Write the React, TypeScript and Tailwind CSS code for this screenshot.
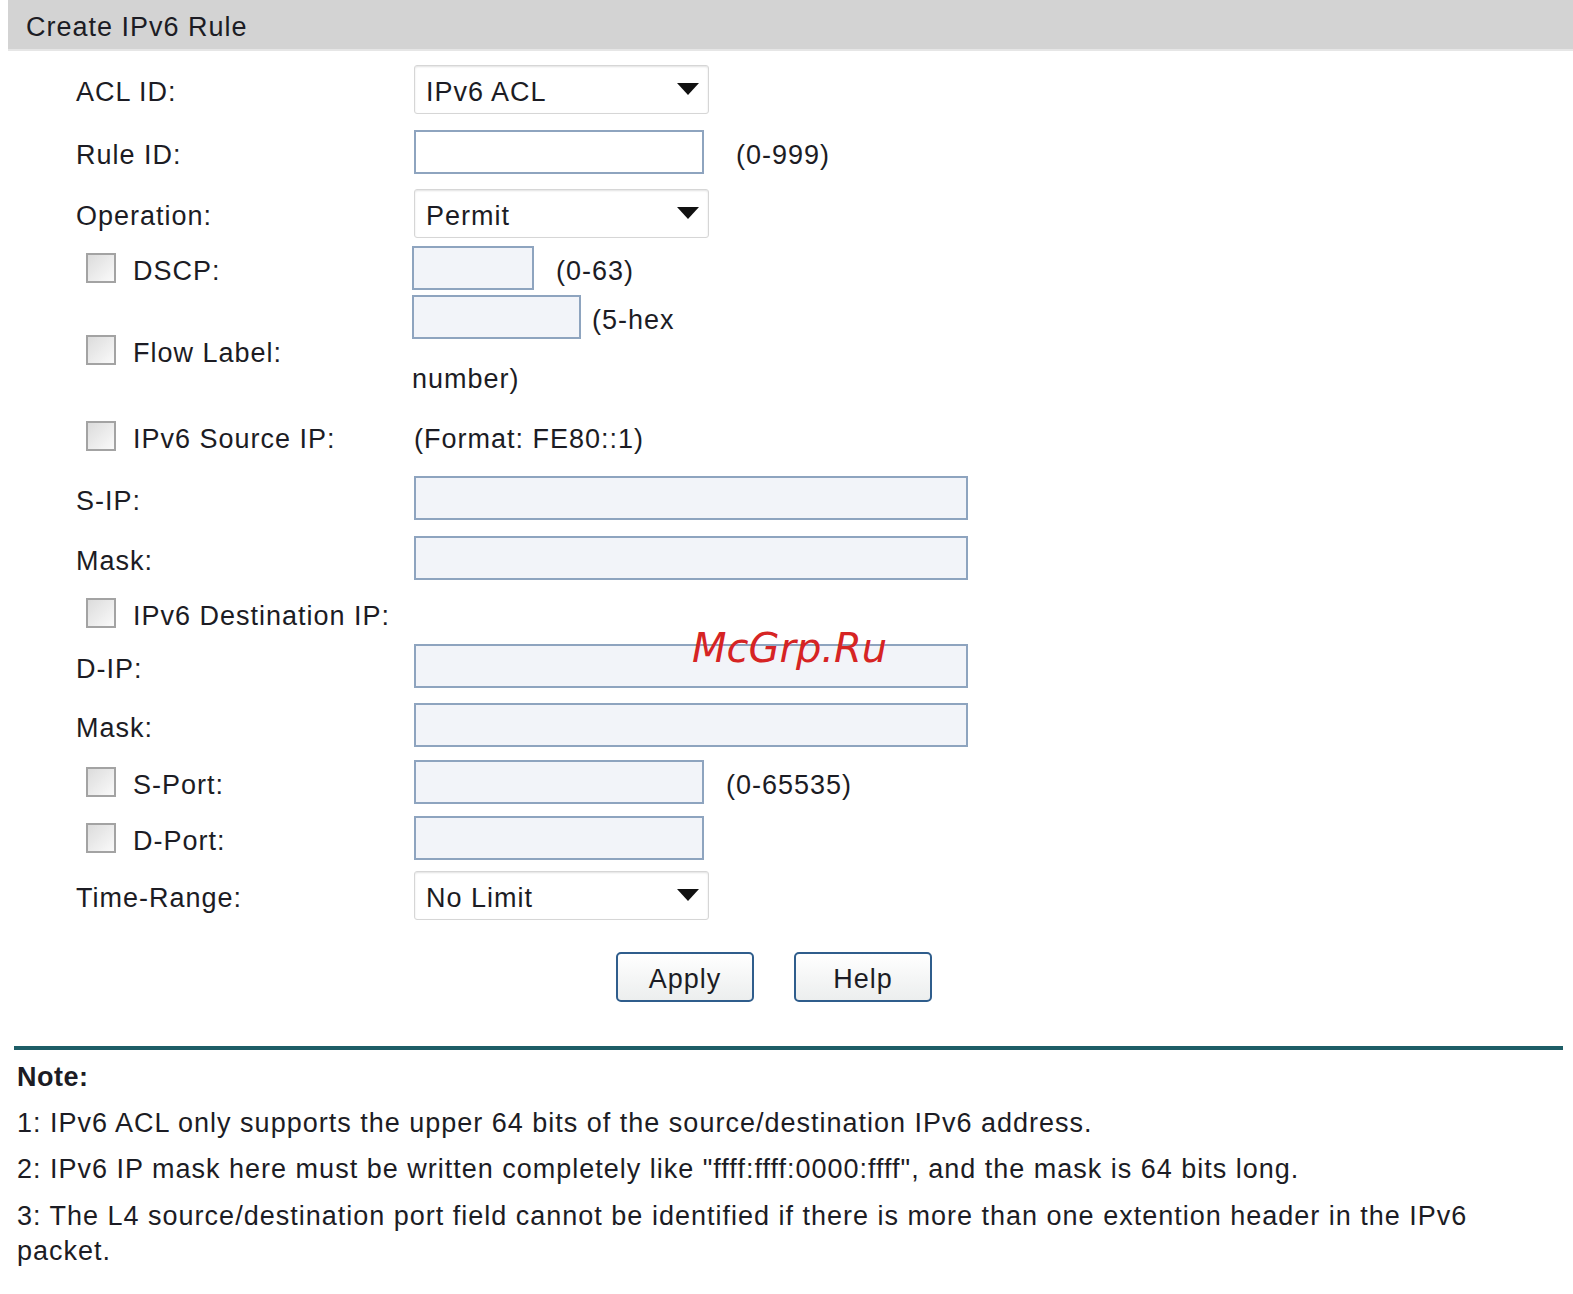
import React from "react";

const font = { fontFamily: '"Liberation Sans", Arial, sans-serif' };

function Checkbox() {
  return (
    <span className="inline-block w-[30px] h-[30px] border-2 border-[#a3a3a3] bg-gradient-to-br from-[#dcdcdc] to-[#fafafa] shrink-0" />
  );
}

function T({ children }: { children: React.ReactNode }) {
  return <span className="pt-[6px]">{children}</span>;
}

function Select({ value }: { value: string }) {
  return (
    <div className="w-[295px] h-[49px] bg-white border border-[#d6d6d6] rounded-[3px] shadow-[inset_0_1px_2px_rgba(0,0,0,0.12)] flex items-center justify-between pl-[11px] pr-[8px]">
      <T>{value}</T>
      <svg width="24" height="14" viewBox="0 0 24 14">
        <polygon points="1,1 23,1 12,13" fill="#111" />
      </svg>
    </div>
  );
}

function Input({ w, white }: { w: string; white?: boolean }) {
  return (
    <div
      className={`${w} h-[44px] border-2 border-[#8ea4bf] ${white ? "bg-white" : "bg-[#f2f4f9]"}`}
    />
  );
}

function Row({
  h,
  label,
  check,
  children,
}: {
  h: string;
  label: string;
  check?: boolean;
  children?: React.ReactNode;
}) {
  return (
    <div className={`flex items-center ${h}`}>
      <div className="w-[338px] shrink-0 flex items-center">
        {check ? (
          <>
            <span className="ml-[10px] mr-[17px] flex">
              <Checkbox />
            </span>
            <T>{label}</T>
          </>
        ) : (
          <T>{label}</T>
        )}
      </div>
      <div className="flex items-center">{children}</div>
    </div>
  );
}

export default function App() {
  return (
    <div className="relative w-[1573px] h-[1294px] bg-white text-[27px] tracking-[1px] text-[#1c1c24] leading-none" style={font}>
      <div className="ml-[8px] h-[51px] bg-[#d3d3d3] border-b-2 border-[#e6e6e6] flex items-center pl-[18px] text-[27px]">
        <T>Create IPv6 Rule</T>
      </div>

      <div className="pl-[76px] pt-[7px]">
        <Row h="h-[62px]" label="ACL ID:">
          <Select value="IPv6 ACL" />
        </Row>
        <Row h="h-[64px]" label="Rule ID:">
          <Input w="w-[290px]" white />
          <span className="ml-[32px] pt-[6px]">(0-999)</span>
        </Row>
        <Row h="h-[58px]" label="Operation:">
          <Select value="Permit" />
        </Row>
        <Row h="h-[52px]" label="DSCP:" check>
          <span className="-ml-[2px] flex items-center">
            <Input w="w-[122px]" />
            <span className="ml-[22px] pt-[6px]">(0-63)</span>
          </span>
        </Row>
        <div className="flex items-center h-[112px]">
          <div className="w-[338px] shrink-0 flex items-center">
            <span className="ml-[10px] mr-[17px] flex">
              <Checkbox />
            </span>
            <T>Flow Label:</T>
          </div>
          <div className="self-start pt-[1px] -ml-[2px]">
            <div className="flex items-center">
              <Input w="w-[169px]" />
              <span className="ml-[11px] pt-[6px]">(5-hex</span>
            </div>
            <div className="mt-[27px]">number)</div>
          </div>
        </div>
        <Row h="h-[60px]" label="IPv6 Source IP:" check>
          <T>(Format: FE80::1)</T>
        </Row>
        <Row h="h-[64px]" label="S-IP:">
          <Input w="w-[554px]" />
        </Row>
        <Row h="h-[56px]" label="Mask:">
          <Input w="w-[554px]" />
        </Row>
        <Row h="h-[54px]" label="IPv6 Destination IP:" check />
        <Row h="h-[52px]" label="D-IP:">
          <Input w="w-[554px]" />
        </Row>
        <Row h="h-[66px]" label="Mask:">
          <Input w="w-[554px]" />
        </Row>
        <Row h="h-[48px]" label="S-Port:" check>
          <Input w="w-[290px]" />
          <span className="ml-[22px] pt-[6px]">(0-65535)</span>
        </Row>
        <Row h="h-[64px]" label="D-Port:" check>
          <Input w="w-[290px]" />
        </Row>
        <Row h="h-[50px]" label="Time-Range:">
          <Select value="No Limit" />
        </Row>
      </div>

      <div className="flex gap-[40px] pl-[616px] mt-[32px]">
        <button className="w-[138px] h-[50px] border-2 border-[#2f5d8c] rounded-[5px] bg-gradient-to-b from-white to-[#eceeee] text-[27px] tracking-[1px] text-[#1c1c24] pt-[4px]" style={font}>
          Apply
        </button>
        <button className="w-[138px] h-[50px] border-2 border-[#2f5d8c] rounded-[5px] bg-gradient-to-b from-white to-[#eceeee] text-[27px] tracking-[1px] text-[#1c1c24] pt-[4px]" style={font}>
          Help
        </button>
      </div>

      <div className="ml-[14px] w-[1549px] h-[4px] bg-[#1d5d66] mt-[44px]" />

      <div className="pl-[17px] pt-[11px] w-[1520px] text-[27px]">
        <div className="font-bold h-[32px] flex items-center tracking-[0.5px]">Note:</div>
        <div className="mt-[14px] h-[32px] flex items-center">
          1: IPv6 ACL only supports the upper 64 bits of the source/destination IPv6 address.
        </div>
        <div className="mt-[14px] h-[32px] flex items-center">
          2: IPv6 IP mask here must be written completely like "ffff:ffff:0000:ffff", and the mask is 64 bits long.
        </div>
        <div className="mt-[14px] leading-[35px]">
          3: The L4 source/destination port field cannot be identified if there is more than one extention header in the IPv6 packet.
        </div>
      </div>

      <div
        className="absolute left-[692px] top-[628px] text-[40px] italic text-[#d62424] leading-none tracking-normal"
        style={{ fontFamily: '"DejaVu Sans", sans-serif' }}
      >
        McGrp.Ru
      </div>
    </div>
  );
}
